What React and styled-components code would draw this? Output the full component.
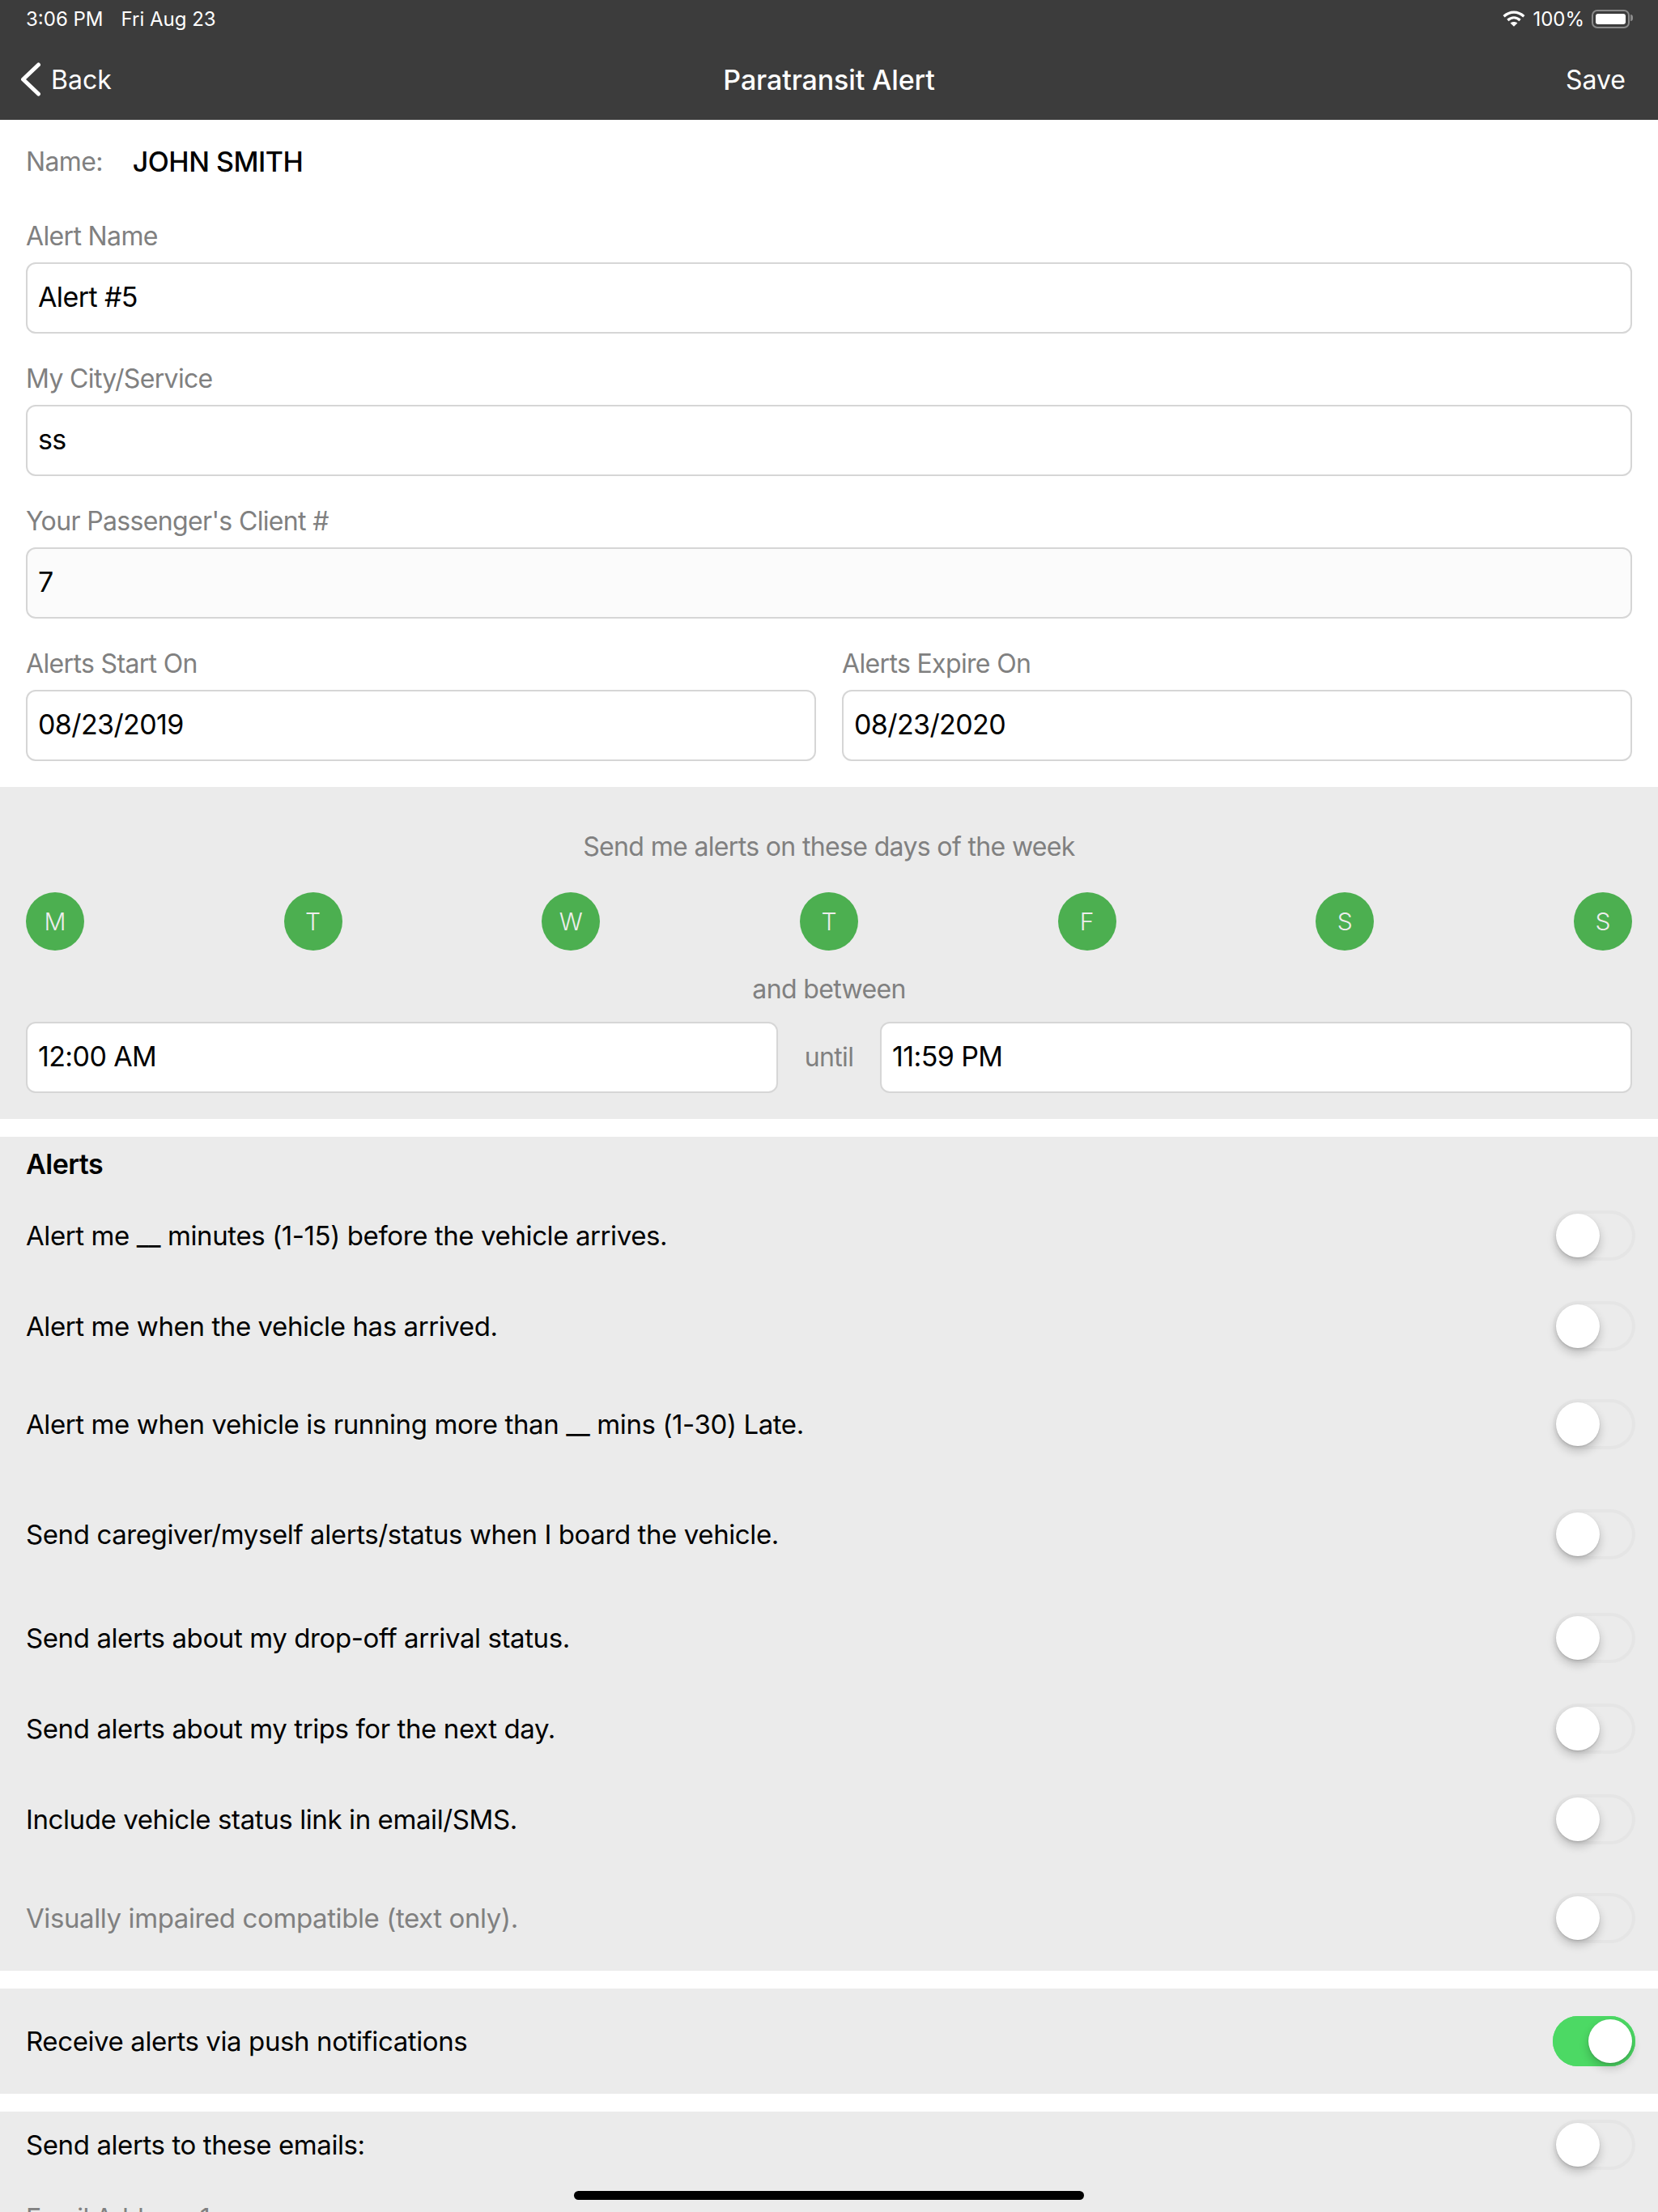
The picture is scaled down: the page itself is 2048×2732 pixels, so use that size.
import React from "react";
import styled, { createGlobalStyle } from "styled-components";

const DAYS = ["M", "T", "W", "T", "F", "S", "S"];

const ALERTS = [
    { label: "Alert me __ minutes (1-15) before the vehicle arrives.", height: 112 },
    { label: "Alert me when the vehicle has arrived.", height: 112 },
    { label: "Alert me when vehicle is running more than __ mins (1-30) Late.", height: 130 },
    { label: "Send caregiver/myself alerts/status when I board the vehicle.", height: 142 },
    { label: "Send alerts about my drop-off arrival status.", height: 114 },
    { label: "Send alerts about my trips for the next day.", height: 110 },
    { label: "Include vehicle status link in email/SMS.", height: 114 },
    { label: "Visually impaired compatible (text only).", height: 130, muted: true },
];

export default function App() {
    return (
        <>
            <GlobalStyle />
            <Page>
                <Header>
                    <StatusBar>
                        <StatusLeft>
                            <span>3:06 PM</span>
                            <span>Fri Aug 23</span>
                        </StatusLeft>
                        <StatusRight>
                            <svg width="28" height="20" viewBox="0 0 28 20" fill="none" stroke="#fff" strokeWidth="3.2">
                                <path d="M1.6 7.2C9 0.4 19 0.4 26.4 7.2" />
                                <path d="M6.4 12C11 7.8 17 7.8 21.6 12" />
                                <path d="M14 19.8 L9.6 15.4 C12 13.4 16 13.4 18.4 15.4 Z" fill="#fff" stroke="none" />
                            </svg>
                            <span>100%</span>
                            <Battery>
                                <BatteryFill />
                            </Battery>
                        </StatusRight>
                    </StatusBar>
                    <NavBar>
                        <BackButton>
                            <svg width="26" height="42" viewBox="0 0 26 42" fill="none" stroke="#fff" strokeWidth="5" strokeLinecap="round" strokeLinejoin="round">
                                <path d="M22.5 3L3.5 21L22.5 39" />
                            </svg>
                            Back
                        </BackButton>
                        <NavTitle>Paratransit Alert</NavTitle>
                        <SaveButton>Save</SaveButton>
                    </NavBar>
                </Header>

                <Form>
                    <NameRow>
                        <Label>Name:</Label>
                        <NameValue>JOHN SMITH</NameValue>
                    </NameRow>
                    <FieldGroup>
                        <Label>Alert Name</Label>
                        <Field>Alert #5</Field>
                    </FieldGroup>
                    <FieldGroup>
                        <Label>My City/Service</Label>
                        <Field>ss</Field>
                    </FieldGroup>
                    <FieldGroup>
                        <Label>Your Passenger's Client #</Label>
                        <Field disabled>7</Field>
                    </FieldGroup>
                    <DateRow>
                        <FieldGroup>
                            <Label>Alerts Start On</Label>
                            <Field>08/23/2019</Field>
                        </FieldGroup>
                        <FieldGroup>
                            <Label>Alerts Expire On</Label>
                            <Field>08/23/2020</Field>
                        </FieldGroup>
                    </DateRow>
                </Form>

                <DaysSection>
                    <CenterText>Send me alerts on these days of the week</CenterText>
                    <DayRow>
                        {DAYS.map((day, i) => <DayCircle key={i}>{day}</DayCircle>)}
                    </DayRow>
                    <BetweenText>and between</BetweenText>
                    <TimeRow>
                        <Field>12:00 AM</Field>
                        <CenterText>until</CenterText>
                        <Field>11:59 PM</Field>
                    </TimeRow>
                </DaysSection>

                <Section>
                    <SectionTitle>Alerts</SectionTitle>
                    {ALERTS.map(alert => (
                        <ToggleRow key={alert.label} height={alert.height}>
                            <RowText muted={alert.muted}>{alert.label}</RowText>
                            <Toggle />
                        </ToggleRow>
                    ))}
                </Section>

                <Section>
                    <ToggleRow height={130}>
                        <RowText>Receive alerts via push notifications</RowText>
                        <Toggle on />
                    </ToggleRow>
                </Section>

                <Section>
                    <ToggleRow height={82}>
                        <RowText>Send alerts to these emails:</RowText>
                        <Toggle />
                    </ToggleRow>
                    <EmailLabel>Email Address 1</EmailLabel>
                </Section>

                <HomeIndicator />
            </Page>
        </>
    );
}

const Toggle = ({ on }) => (
    <Track $on={on}>
        <Knob />
    </Track>
);

const GlobalStyle = createGlobalStyle`

    html, body {
        margin: 0;
        height: 2732px;
        overflow: hidden;
        background-color: #FFFFFF;
    }

    body {
        font-family: Inter, "Liberation Sans", sans-serif;
    }
`;

const Page = styled.div`

    position: relative;
    width: 2048px;
    height: 2732px;
    overflow: hidden;
    display: flex;
    flex-direction: column;
`;

const Header = styled.header`

    height: 148px;
    flex-shrink: 0;
    color: #FFFFFF;
    background-color: #3C3C3C;
`;

const StatusBar = styled.div`

    height: 46px;
    display: flex;
    font-size: 24px;
    align-items: center;
    padding: 0 35px 0 32px;
    justify-content: space-between;
`;

const StatusLeft = styled.div`

    display: flex;
    gap: 22px;
`;

const StatusRight = styled.div`

    display: flex;
    gap: 9px;
    align-items: center;
`;

const Battery = styled.div`

    width: 47px;
    height: 23px;
    padding: 3px;
    position: relative;
    border-radius: 7px;
    box-sizing: border-box;
    border: 2px solid rgba(255, 255, 255, 0.4);

    &::after {
        content: "";
        position: absolute;
        top: 4px;
        right: -6px;
        width: 3px;
        height: 8px;
        border-radius: 0 3px 3px 0;
        background-color: rgba(255, 255, 255, 0.4);
    }
`;

const BatteryFill = styled.div`

    width: 100%;
    height: 100%;
    border-radius: 3px;
    background-color: #FFFFFF;
`;

const NavBar = styled.div`

    height: 102px;
    display: grid;
    font-size: 32px;
    padding: 2px 25px 0;
    align-items: center;
    box-sizing: border-box;
    grid-template-columns: 1fr auto 1fr;
`;

const BackButton = styled.div`

    display: flex;
    gap: 12px;
    align-items: center;
`;

const NavTitle = styled.div`

    font-size: 34px;
    font-weight: 500;
    letter-spacing: -0.1px;
`;

const SaveButton = styled.div`

    text-align: right;
    margin-right: 15px;
`;

const Form = styled.div`

    display: flex;
    flex-direction: column;
    gap: 36px;
    padding: 32px 32px 32px;
`;

const NameRow = styled.div`

    display: flex;
    gap: 37px;
    margin-bottom: 16px;
`;

const Label = styled.div`

    color: #808080;
    font-size: 32px;
    line-height: 40px;
    letter-spacing: -0.65px;
`;

const NameValue = styled.div`

    color: #000000;
    font-size: 34px;
    font-weight: 500;
    line-height: 40px;
    letter-spacing: -0.5px;
`;

const FieldGroup = styled.div`

    display: flex;
    flex-direction: column;
    gap: 12px;
`;

const Field = styled.div`

    height: 88px;
    display: flex;
    color: #000000;
    font-size: 34px;
    padding: 0 13px 4px;
    align-items: center;
    border-radius: 12px;
    box-sizing: border-box;
    letter-spacing: -0.6px;
    border: 2px solid #D6D6D6;
    background-color: ${props => props.disabled ? "#FBFBFB" : "#FFFFFF"};
`;

const DateRow = styled.div`

    display: grid;
    grid-template-columns: 1fr 1fr;
    column-gap: 32px;
`;

const DaysSection = styled.div`

    height: 410px;
    box-sizing: border-box;
    padding: 54px 32px 32px;
    margin-bottom: 22px;
    background-color: #EBEBEB;
`;

const CenterText = styled.div`

    color: #808080;
    font-size: 32px;
    line-height: 40px;
    text-align: center;
    letter-spacing: -0.65px;
`;

const BetweenText = styled(CenterText)`

    margin: 28px 0 20px;
`;

const DayRow = styled.div`

    display: flex;
    margin-top: 36px;
    justify-content: space-between;
`;

const DayCircle = styled.div`

    width: 72px;
    height: 72px;
    display: flex;
    color: #EDEDED;
    font-size: 30px;
    font-weight: 300;
    border-radius: 50%;
    align-items: center;
    justify-content: center;
    background-color: #4CAF50;
`;

const TimeRow = styled.div`

    display: grid;
    align-items: center;
    grid-template-columns: 1fr 126px 1fr;
`;

const Section = styled.div`

    margin-bottom: 22px;
    background-color: #EBEBEB;
`;

const SectionTitle = styled.div`

    height: 66px;
    display: flex;
    color: #000000;
    font-size: 34px;
    font-weight: 600;
    padding: 0 32px;
    align-items: center;
    letter-spacing: -0.5px;
`;

const ToggleRow = styled.div`

    display: flex;
    align-items: center;
    padding: 0 28px 0 32px;
    height: ${props => props.height}px;
    justify-content: space-between;
`;

const RowText = styled.div`

    font-size: 33px;
    margin-top: -1px;
    letter-spacing: -0.4px;
    color: ${props => props.muted ? "#808080" : "#000000"};
`;

const Track = styled.div`

    width: 102px;
    height: 62px;
    padding: 4px;
    display: flex;
    border-radius: 31px;
    box-sizing: border-box;
    justify-content: ${props => props.$on ? "flex-end" : "flex-start"};
    background-color: ${props => props.$on ? "#4CD964" : "transparent"};
    box-shadow: inset 0 0 0 4px ${props => props.$on ? "#4CD964" : "#E5E5E5"};
`;

const Knob = styled.div`

    width: 54px;
    height: 54px;
    border-radius: 50%;
    background-color: #FFFFFF;
    box-shadow: 0 6px 12px rgba(0, 0, 0, 0.2), 0 1px 2px rgba(0, 0, 0, 0.15);
`;

const EmailLabel = styled(Label)`

    height: 82px;
    padding: 30px 32px 0;
`;

const HomeIndicator = styled.div`

    position: absolute;
    left: 709px;
    bottom: 15px;
    width: 630px;
    height: 11px;
    border-radius: 6px;
    background-color: #000000;
`;
